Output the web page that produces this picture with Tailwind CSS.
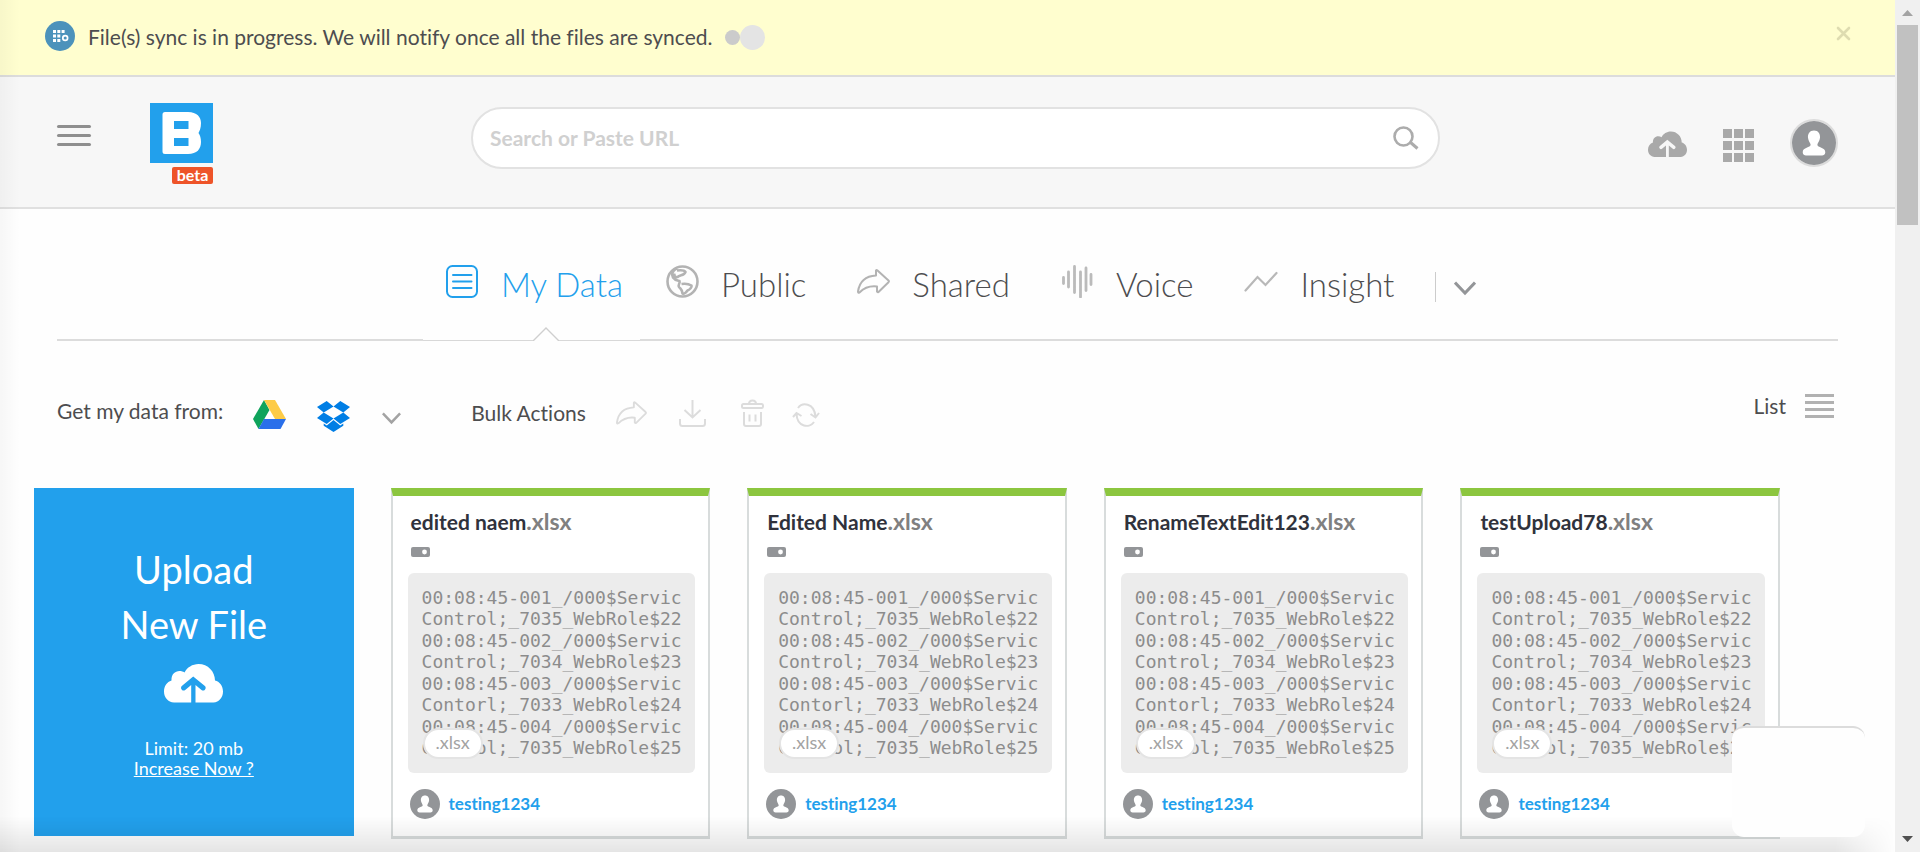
<!DOCTYPE html>
<html lang="en">
<head>
<meta charset="utf-8">
<title>My Data</title>
<script src="https://cdn.jsdelivr.net/npm/@tailwindcss/browser@4"></script>
</head>
<body class="bg-[#fefefe] text-[#4d4d4f] font-['Lato','Open_Sans',sans-serif] [font-variant-ligatures:none]">
<svg class="hidden" aria-hidden="true">
  <symbol id="cloud" viewBox="0 0 59 39"><path fill="currentColor" d="M10 38.500C4 38 0 33.500 0 27.500C0 22 3 18 7.500 16.500C7 10.500 11 7 15.500 7C17.500 7 19 7.500 20.500 8.500C23 3.500 28.500 0 34.500 0C44 0 51 7.500 51 16.500C55.500 17.500 59 22 59 27.500C59 33.500 55 38 49.500 38.500H31.500V21L37.500 26A2.700 2.700 0 0 0 41.200 22.200L29.200 12.500L17.500 22.200A2.700 2.700 0 0 0 21.200 26L27.200 21V38.500Z"/></symbol>
  <symbol id="avatar" viewBox="0 0 30 30"><circle cx="15" cy="15" r="15" fill="#939598"/><path fill="#fff" d="M15 6.500C18 6.500 19.300 8.800 19.100 11.400C18.900 13.800 17.300 15 17.300 16.200C17.300 18.200 22.700 17.800 22.700 21.300C22.700 23 21.500 23.500 20.500 23.500H9.500C8.500 23.500 7.300 23 7.300 21.300C7.300 17.800 12.700 18.200 12.700 16.200C12.700 15 11.100 13.800 10.900 11.400C10.700 8.800 12 6.500 15 6.500Z"/></symbol>
  <symbol id="share" viewBox="0 0 33 25"><path fill="none" stroke="currentColor" stroke-width="2" stroke-linejoin="round" d="M19 6.500V1.500Q19.500 .7 20.500 1.500L31.500 11.500Q32.300 12.300 31.500 13.200L21.500 23Q20.300 23.500 20 22.500V17.500C12 16.500 7 19 2.500 23.500Q1 24.500 1 22.500C2.500 12.500 9 7 19 6.500Z"/></symbol>
  <symbol id="chevron" viewBox="0 0 22 15"><path fill="none" stroke="currentColor" stroke-width="3" d="M1 1.500L11 12L21 1.500"/></symbol>
</svg>

<div class="flex h-screen overflow-hidden">
  <div class="relative flex min-w-0 flex-1 flex-col overflow-hidden">

    <div class="flex h-[77px] shrink-0 items-center border-b-2 border-[#dcdcdc] bg-[#fffecf] pl-[45px] pr-[44px]">
      <svg class="mb-[3px] size-[30px]" viewBox="0 0 30 30"><circle cx="15" cy="15" r="15" fill="#4c92bb"/><g fill="#fff"><path d="M8 9h3v3H8zM12.300 9h3v3h-3zM16.600 9h3v3h-3zM8 13.500h3v3H8zM12.300 13.500h3v3h-3zM8 18h3v3H8zM12.300 18h3v3h-3z"/></g><circle cx="20.200" cy="17" r="2.400" fill="none" stroke="#fff" stroke-width="1.700"/></svg>
      <p class="mb-[2px] ml-[13px] text-[21px] leading-6">File(s) sync is in progress. We will notify once all the files are synced.</p>
      <span class="ml-[12px] size-[15px] rounded-full bg-[#cbcbcb]"></span>
      <span class="size-[25px] rounded-full bg-[#e4e4e4]"></span>
      <button aria-label="Close" class="mb-[8px] ml-auto text-[#dedcb0]"><svg class="size-[15px]" viewBox="0 0 15 15"><path stroke="currentColor" stroke-width="2.600" stroke-linecap="round" d="M2 2l11 11M13 2L2 13"/></svg></button>
    </div>

    <header class="flex h-[132px] shrink-0 items-start border-b-2 border-[#e0e0e0] bg-[#f7f7f7] px-[57px]">
      <button aria-label="Menu" class="mt-12 flex w-[34px] flex-col gap-[6px]">
        <span class="h-[3px] w-full rounded bg-[#8f8f8f]"></span><span class="h-[3px] w-full rounded bg-[#8f8f8f]"></span><span class="h-[3px] w-full rounded bg-[#8f8f8f]"></span>
      </button>
      <a href="#" aria-label="Home" class="ml-[59px] mt-[26px] flex w-[63px] flex-col items-end">
        <svg class="h-[60px] w-[63px] bg-[#22a0ec]" viewBox="0 0 63 60"><path fill="#fff" fill-rule="evenodd" d="M15 9H38C47 9 51 14 51 20C51 25 49.500 28 48.500 30C50 32 51 35 51 39C51 46 47 51 38 51H15Q12.500 51 12.500 48.500V11.500Q12.500 9 15 9ZM24 18V26H38.500V18ZM24 35V43H38.500V35Z"/></svg>
        <span class="mt-1 h-[17px] w-[41px] rounded-xs bg-[#ee5429] text-center text-[16px] leading-4 font-bold text-white">beta</span>
      </a>
      <form class="ml-[258px] mt-[30px] flex h-[62px] flex-1 items-center rounded-full border-2 border-[#e2e2e2] bg-white pl-[17px] pr-[19px]">
        <input type="text" aria-label="Search or Paste URL" placeholder="Search or Paste URL" class="min-w-0 flex-1 text-[21px] font-bold outline-none placeholder:text-[#d0d0d0]">
        <button aria-label="Search" class="text-[#acacac]"><svg class="h-[24px] w-[27px]" viewBox="0 0 27 24"><circle cx="11.500" cy="10.500" r="9" fill="none" stroke="currentColor" stroke-width="2.600"/><path stroke="currentColor" stroke-width="3" d="M18 16l7.500 6.500"/></svg></button>
      </form>
      <button aria-label="Upload" class="ml-[208px] mt-[54px] text-[#a9a9a9]"><svg class="h-[27px] w-[39px]"><use href="#cloud"/></svg></button>
      <button aria-label="Apps" class="ml-[36px] mt-[52px] grid grid-cols-3 gap-x-[2px] gap-y-[3px]">
        <span class="size-[9px] bg-[#a9a9a9]"></span><span class="size-[9px] bg-[#a9a9a9]"></span><span class="size-[9px] bg-[#a9a9a9]"></span>
        <span class="size-[9px] bg-[#a9a9a9]"></span><span class="size-[9px] bg-[#a9a9a9]"></span><span class="size-[9px] bg-[#a9a9a9]"></span>
        <span class="size-[9px] bg-[#a9a9a9]"></span><span class="size-[9px] bg-[#a9a9a9]"></span><span class="size-[9px] bg-[#a9a9a9]"></span>
      </button>
      <button aria-label="Account" class="ml-[36px] mt-[42px] rounded-full border-2 border-[#dcdcdc]"><svg class="size-[44px]"><use href="#avatar"/></svg></button>
    </header>

    <nav class="mx-[57px] flex h-[132px] shrink-0 items-start border-b-2 border-[#dcdcdc] pl-[366px] text-[33px] font-light leading-[38px]">
      <a href="#" class="relative -mb-[2px] flex h-[132px] w-[217px] shrink-0 items-start gap-[22px] border-b border-[#d8d8d8] bg-[#fefefe] pl-[23px] pt-[56px] text-[#22a0ec]">
        <svg class="h-[33px] w-[33px]" viewBox="0 0 33 33" fill="none" stroke="currentColor" stroke-width="2" stroke-linecap="round"><rect x="1" y="1" width="30" height="31" rx="5.500"/><path d="M7 10h18.500M7 16.500h18.500M7 23h18.500"/></svg>
        <span>My Data</span>
        <svg class="absolute bottom-[-1px] left-[110px] h-[14px] w-[26px]" viewBox="0 0 26 14"><path fill="#fefefe" stroke="#cfcfcf" stroke-width="1.400" d="M0 14L13 1L26 14"/></svg>
      </a>
      <div class="flex items-start gap-[51px] pl-[26px] pt-[56px]">
        <a href="#" class="flex gap-[22px]">
          <svg class="size-[33px] text-[#b3b3b3]" viewBox="0 0 33 33" fill="none" stroke="currentColor" stroke-width="2.600" stroke-linejoin="round"><circle cx="16.500" cy="16.500" r="15"/><path d="M11 3C5.500 6 5.500 10 7 12.500C9 15.500 12 15.500 13.500 16C14.500 18 11.500 20 13 22C15 24.500 16 24 16.500 28.500C18 29.500 20 27.500 21.500 25.500C24 24.500 26 22 25.500 20.500C23 19 18.500 18.500 15.500 19M8.500 8.500C8 11 9 12.500 11.500 12C14 9.500 18 11 19.500 7C18.500 5.500 14.500 5 11 5.500"/></svg>
          <span>Public</span></a>
        <a href="#" class="flex gap-[22px]"><svg class="mt-1 h-[25px] w-[33px] text-[#b3b3b3]"><use href="#share"/></svg><span>Shared</span></a>
        <a href="#" class="flex gap-[22px]"><svg class="size-[33px] text-[#bbb]" viewBox="0 0 33 33" stroke="currentColor" stroke-width="2.800" stroke-linecap="round"><path d="M2.500 12.500v6M7.500 7v15M13.500 1.500v26M19.500 7v25M25 3v22.500M30 9.500v10"/></svg><span>Voice</span></a>
        <a href="#" class="flex gap-[22px]"><svg class="mt-[6px] h-[21px] w-[34px] text-[#b8b8b8]" viewBox="0 0 34 21" fill="none" stroke="currentColor" stroke-width="2.200" stroke-linecap="round"><path d="M1.500 19.500L13.500 6L21.500 14L32.500 2"/></svg><span>Insight</span></a>
      </div>
      <span class="ml-[41px] mt-[63px] h-[30px] w-px bg-[#ccc]"></span>
      <button aria-label="More categories" class="ml-[18px] mt-[72px] text-[#939598]"><svg class="h-[15px] w-[22px]"><use href="#chevron"/></svg></button>
    </nav>

    <div class="flex h-[147px] shrink-0 items-start px-[57px] text-[21px] leading-6">
      <span class="mt-[58px]">Get my data from:</span>
      <button aria-label="Google Drive" class="ml-[30px] mt-[59px]"><svg class="h-[29px] w-[33px]" viewBox="0 0 33 29"><path fill="#0fa35c" d="M11 0L0 19L5.500 29L16.500 10Z"/><path fill="#fdcb47" d="M11 0H22L33 19H22Z"/><path fill="#2a6fea" d="M11 19H33L27.500 29H5.500Z"/></svg></button>
      <button aria-label="Dropbox" class="ml-[31px] mt-[60px]"><svg class="h-[31px] w-[33px]" viewBox="0 0 33 31" fill="#007ee5"><path d="M9.700 0L16.500 5.500L6.700 11.500L0 6ZM23.300 0L33 6L26.300 11.500L16.500 5.500ZM6.700 11.500L16.500 17.500L9.700 23L0 17ZM26.300 11.500L33 17L23.300 23L16.500 17.500ZM6.700 22.500L9.800 24.500L16.500 19L23.200 24.500L26.300 22.500V24.800L16.500 31L6.700 24.800Z"/></svg></button>
      <button aria-label="More sources" class="ml-[32px] mt-[71px] text-[#a3a3a3]"><svg class="h-[13px] w-[19px]"><use href="#chevron"/></svg></button>
      <span class="ml-[70px] mt-[60px]">Bulk Actions</span>
      <div class="ml-[30px] mt-[58px] flex items-center gap-[32px] text-[#dcdcdc]">
        <button aria-label="Share"><svg class="h-[24px] w-[31px]"><use href="#share"/></svg></button>
        <button aria-label="Download"><svg class="h-[28px] w-[27px]" viewBox="0 0 27 28" fill="none" stroke="currentColor" stroke-width="2"><path d="M13.500 1v17M5.500 11l8 7.500l8-7.500M1 20v4.500Q1 27 3.500 27H23.500Q26 27 26 24.500V20"/></svg></button>
        <button aria-label="Delete" class="ml-[3px]"><svg class="h-[28px] w-[23px]" viewBox="0 0 23 28" fill="none" stroke="currentColor" stroke-width="2"><rect x="1" y="5" width="21" height="4" rx="1.500"/><path d="M8 5Q8 1.500 11.500 1.500T15 5M3 13v12Q3 27 5 27H18Q20 27 20 25V13M8.500 15.500v7M14.500 15.500v7"/></svg></button>
        <button aria-label="Refresh" class="-ml-1 mt-1"><svg class="h-[24px] w-[28px]" viewBox="0 0 28 24" fill="none" stroke="currentColor" stroke-width="2"><path d="M6 5C10 -.5 22 -1 23.500 13.500M27 10l-3.500 4.500l-5-3.500M22 19C18 25 5 25 4.500 10.500M1 14l3.500-4l5 3"/></svg></button>
      </div>
      <span class="ml-auto mt-[53px]">List</span>
      <button aria-label="List view" class="ml-[19px] mr-[4px] mt-[53px] flex w-[29px] flex-col gap-[4px]">
        <span class="h-[3px] bg-[#b1b1b1]"></span><span class="h-[3px] bg-[#b1b1b1]"></span><span class="h-[3px] bg-[#b1b1b1]"></span><span class="h-[3px] bg-[#b1b1b1]"></span>
      </button>
    </div>

    <main id="cards" class="grid grid-cols-5 items-start gap-[37px] pl-[34px] pr-[115px]">
      <section class="flex h-[348px] flex-col items-center bg-[#22a0ec] pt-[54px] text-white">
        <h2 class="text-center text-[38px] leading-[55px]">Upload<br>New File</h2>
        <svg class="mt-[12px] h-[39px] w-[59px]"><use href="#cloud"/></svg>
        <p class="mt-[35px] text-[18px] leading-[20px]">Limit: 20 mb</p>
        <a href="#" class="text-[18px] leading-[20px] underline">Increase Now ?</a>
      </section>
    </main>

    <template id="card">
      <article class="h-[351px] border-2 border-b-[3px] border-t-8 border-[#d8dcdc] border-t-[#8cc63f] bg-white pl-[15px] pr-[13px]">
        <h3 class="ml-[3px] mt-[11px] h-7 whitespace-nowrap text-[21px] font-bold leading-7 text-[#30323c]"><span data-name></span><span class="text-[23px] text-[#808080]">.xlsx</span></h3>
        <svg class="ml-[3px] mt-[12px] h-[10px] w-[19px]" viewBox="0 0 19 10"><rect width="19" height="10" rx="2" fill="#939598"/><circle cx="13.500" cy="5" r="2.400" fill="#fff"/></svg>
        <div class="relative mt-[16px] flex h-[200px] flex-col gap-px overflow-hidden rounded-md bg-[#ececec] pl-[14px] pt-[14px] font-['DejaVu_Sans_Mono',monospace] text-[18px] leading-[21px] text-[#8c8c8c]">
          <p>00:08:45-001_/000$Servic<br>Control;_7035_WebRole$22</p>
          <p>00:08:45-002_/000$Servic<br>Control;_7034_WebRole$23</p>
          <p>00:08:45-003_/000$Servic<br>Contorl;_7033_WebRole$24</p>
          <p>00:08:45-004_/000$Servic<br>Control;_7035_WebRole$25</p>
          <span class="absolute bottom-[14px] left-[15px] flex h-[31px] w-[60px] items-center justify-center rounded-full border-2 border-[#e4e4e4] bg-white pb-[3px] font-['Lato',sans-serif] text-[18px] text-[#a3a3a3]">.xlsx</span>
        </div>
        <div class="ml-[2px] mt-[16px] flex items-center gap-[9px]">
          <svg class="size-[30px]"><use href="#avatar"/></svg>
          <a href="#" class="text-[17px] font-bold leading-6 text-[#22a0ec]">testing1234</a>
        </div>
      </article>
    </template>

    <div class="pointer-events-none absolute inset-y-0 left-0 w-[20px] bg-linear-to-r from-black/3 to-transparent"></div>
    <div class="pointer-events-none absolute bottom-0 left-0 right-0 h-[36px] bg-linear-to-t from-black/10 to-transparent [mask-image:linear-gradient(to_left,transparent,black_60px)]"></div>
    <div class="absolute bottom-[15px] right-[30px] h-[111px] w-[133px] rounded-xl border-t-2 border-[#dcdcdc] bg-[#fefefe]"></div>
  </div>

  <div class="flex w-[25px] shrink-0 flex-col items-center bg-[#f0f0f0] py-[10px]" aria-hidden="true">
    <svg class="h-[6px] w-[11px]" viewBox="0 0 11 6"><path fill="#a3a3a3" d="M5.500 0L11 6H0Z"/></svg>
    <div class="mt-[9px] h-[200px] w-[21px] bg-[#c1c1c1]"></div>
    <svg class="mt-auto h-[6px] w-[11px]" viewBox="0 0 11 6"><path fill="#505050" d="M5.500 6L11 0H0Z"/></svg>
  </div>
</div>
<script>
  const grid = document.getElementById('cards');
  for (const name of ['edited naem', 'Edited Name', 'RenameTextEdit123', 'testUpload78']) {
    const card = document.getElementById('card').content.cloneNode(true);
    card.querySelector('[data-name]').textContent = name;
    grid.append(card);
  }
</script>
</body>
</html>
